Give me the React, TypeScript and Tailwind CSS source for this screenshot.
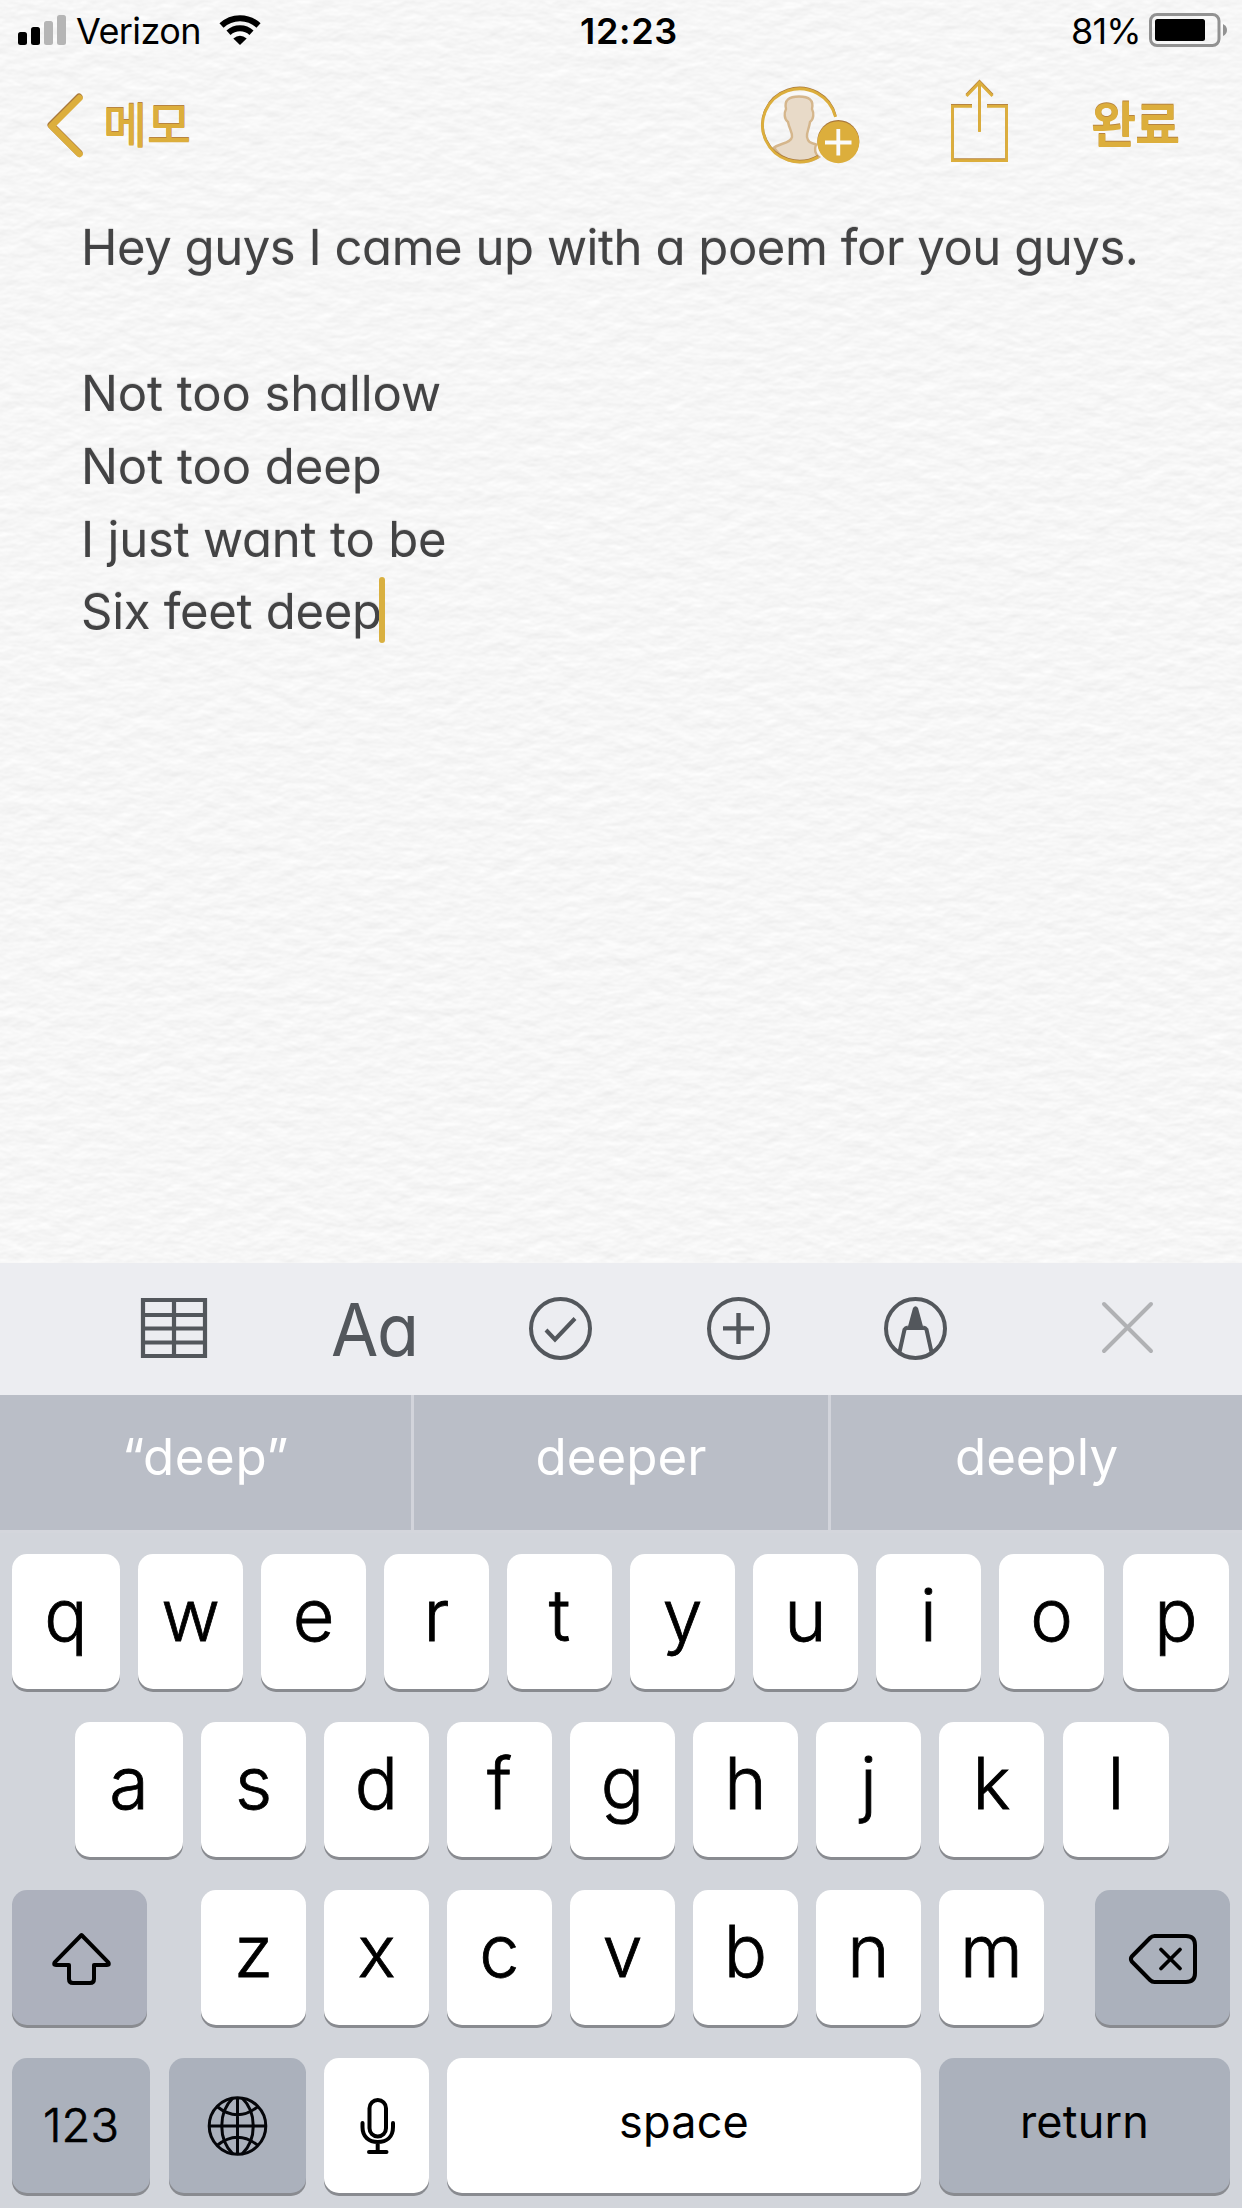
import type { ReactNode } from "react";

const GOLD = "#dcae3c";
const INK = "#53575c";

function Icon({ box, className = "", children }: { box: [number, number, number, number]; className?: string; children: ReactNode }) {
  return (
    <svg
      viewBox={box.join(" ")}
      width={box[2]}
      height={box[3]}
      fill="none"
      className={`block shrink-0 overflow-visible ${className}`}
    >
      {children}
    </svg>
  );
}

function PaperTexture() {
  return (
    <svg className="pointer-events-none absolute inset-0 h-full w-full" aria-hidden="true">
      <filter id="paper" x="0" y="0" width="100%" height="100%" colorInterpolationFilters="sRGB">
        <feTurbulence type="fractalNoise" baseFrequency="0.045 0.08" numOctaves="3" seed="8" result="n" />
        <feDiffuseLighting in="n" surfaceScale="0.26" diffuseConstant="1.12" lightingColor="#f9f9f9">
          <feDistantLight azimuth="264" elevation="62" />
        </feDiffuseLighting>
      </filter>
      <rect width="100%" height="100%" filter="url(#paper)" />
    </svg>
  );
}

function StatusBar() {
  return (
    <div className="flex h-[60px] items-start text-[36px] leading-[62px] text-black">
      <Icon box={[18, 15, 48, 30]} className="mt-[15px] ml-[18px]">
        <rect x="18" y="32" width="9" height="13" rx="2.5" fill="#000" />
        <rect x="31" y="27" width="9" height="18" rx="2.5" fill="#000" />
        <rect x="44" y="21" width="9" height="24" rx="2.5" fill="#b5b5b5" />
        <rect x="57" y="15" width="9" height="30" rx="2.5" fill="#b5b5b5" />
      </Icon>
      <span className="ml-[10px] w-[143px] tracking-[-0.6px]">Verizon</span>
      <Icon box={[219, 15, 42, 30]} className="mt-[15px]">
        <path d="M221.5 25.5A27 27 0 0 1 258.500 25.5" stroke="#000" strokeWidth="6" />
        <path d="M228.500 32.700A17 17 0 0 1 251.500 32.700" stroke="#000" strokeWidth="6" />
        <path d="M240 45L233.300 38.500Q240 33 246.700 38.500Z" fill="#000" />
      </Icon>
      <span className="ml-[319px] w-[119px] font-semibold tracking-[0.7px]">12:23</span>
      <span className="ml-[372px] w-[78px] tracking-[-0.8px]">81%</span>
      <Icon box={[1149, 13, 79, 34]} className="mt-[13px]">
        <rect x="1150.500" y="14.500" width="68.500" height="31" rx="6.500" stroke="#929292" strokeWidth="3" />
        <rect x="1155" y="19" width="50" height="22" rx="2.500" fill="#000" />
        <path d="M1223 24Q1227 26 1227 30Q1227 34 1223 36Z" fill="#929292" />
      </Icon>
    </div>
  );
}

function ShareGlyphs({ color }: { color: string }) {
  return (
    <g stroke={color} strokeWidth="2.800">
      <path d="M972 106.400H952.400V160.600H1006.600V106.400H987" />
      <path d="M979.500 132V83" />
      <path d="M966.500 96L979.500 82.500L992.500 96" />
    </g>
  );
}

function NavBar() {
  return (
    <div className="flex h-[151px] items-start font-['Inter','Noto_Sans_CJK_KR',sans-serif] text-[#dcae3c]">
      <Icon box={[47, 94, 36, 63]} className="mt-[34px] ml-[47px]">
        <path d="M79 97L51 125L79 153" stroke="#a9783c" strokeWidth="7" strokeLinecap="round" strokeLinejoin="round" />
        <path d="M79.500 98L51.500 126L79.500 154" stroke={GOLD} strokeWidth="6.500" strokeLinecap="round" strokeLinejoin="round" />
      </Icon>
      <span className="mt-[34px] ml-[20px] w-[100px] text-[48px] leading-[64px] font-medium tracking-[-0.2px] [text-shadow:0_-1px_0_#b88440]">메모</span>
      <Icon box={[762, 86, 98, 77]} className="mt-[27px] ml-[559px]">
        <path
          d="M774 146.500C781 142 791 142 792 136C792.500 131 789.500 129 788 121C784 118 784 112 786 108C784 99 789 95.500 799 95.500C809 95.500 814 99 812 108C814 112 814 118 810 121C809 128 806.500 131 807 136C808 141 810 142 816 143.500C814 149 815 153 819 156C814 159.500 807 161 799.500 161C789 161 780 156 774 146.500Z"
          fill="#e8dac8"
          stroke="#d5b68c"
          strokeWidth="2.400"
        />
        <path d="M835.500 116A37 36.500 0 1 0 818 156" stroke="#a9783c" strokeWidth="2.500" transform="translate(0 -1)" />
        <path d="M835.500 116A37 36.500 0 1 0 818 156" stroke={GOLD} strokeWidth="2.800" />
        <circle cx="838.300" cy="140" r="21" fill="#a9783c" />
        <circle cx="838.300" cy="141.200" r="21" fill={GOLD} />
        <path d="M825 141.500H851.500M838.300 128V154.500" stroke="#fafafa" strokeWidth="3.800" />
      </Icon>
      <Icon box={[950, 80, 59, 83]} className="mt-[20px] ml-[90px]">
        <g transform="translate(0 -1)"><ShareGlyphs color="#b88440" /></g>
        <ShareGlyphs color={GOLD} />
      </Icon>
      <span className="mt-[34px] ml-[82px] text-[49px] leading-[64px] font-bold tracking-[-1px] [text-shadow:0_-1px_0_#b88440]">완료</span>
    </div>
  );
}

function Note() {
  return (
    <div className="px-[81px] text-[49px] leading-[73px] whitespace-pre text-[#434344] [font-feature-settings:'cv11'] [text-shadow:0_-1px_1px_rgba(0,0,0,0.15)]">
      <p className="tracking-[-0.45px]">Hey guys I came up with a poem for you guys.</p>
      <p className="h-[73px]" />
      <p className="tracking-[-0.1px]">Not too shallow</p>
      <p className="tracking-[-0.05px]">Not too deep</p>
      <p className="tracking-[-0.2px]">I just want to be</p>
      <p className="-mt-px flex items-center tracking-[-0.3px]">
        Six feet deep
        <span className="-mt-[3px] -ml-[3px] h-[66px] w-[6px] rounded-full bg-[#d9b040]" />
      </p>
    </div>
  );
}

function Toolbar() {
  return (
    <div className="relative flex h-[132px] items-start bg-[#ecedf1]">
      <Icon box={[141, 1298, 66, 60]} className="mt-[35px] ml-[141px]">
        <path d="M143 1300H205V1356H143ZM174 1300V1356M143 1315H205M143 1328.500H205M143 1342.500H205" stroke={INK} strokeWidth="4.200" />
      </Icon>
      <span className="mt-[27px] ml-[124px] w-[198px] origin-left scale-x-[0.94] text-[73px] leading-[80px] tracking-[-1.5px] text-[#53575c] [font-feature-settings:'cv11']">Aa</span>
      <Icon box={[529, 1297, 63, 63]} className="mt-[34px]">
        <circle cx="560.500" cy="1328.400" r="29.500" stroke={INK} strokeWidth="4" />
        <path d="M546 1330L555 1339.500L575 1318.500" stroke={INK} strokeWidth="4" />
      </Icon>
      <Icon box={[707, 1297, 63, 63]} className="mt-[34px] ml-[115px]">
        <circle cx="738.500" cy="1328.400" r="29.500" stroke={INK} strokeWidth="4" />
        <path d="M723 1328.400H754M738.500 1313V1344" stroke={INK} strokeWidth="4.400" />
      </Icon>
      <Icon box={[884, 1297, 63, 63]} className="mt-[34px] ml-[114px]">
        <circle cx="915.500" cy="1328.400" r="29.500" stroke={INK} strokeWidth="4" />
        <path d="M899.500 1352L904.500 1329.500Q905.500 1328 908 1327.500M931.500 1352L926.500 1329.500Q925.500 1328 923 1327.500" stroke={INK} strokeWidth="4" />
        <path d="M907 1330L913 1308Q915.500 1304.500 918 1308L924 1330Z" fill={INK} />
      </Icon>
      <Icon box={[1102, 1302, 51, 51]} className="mt-[39px] ml-[155px]">
        <path d="M1104 1304L1151 1351M1151 1304L1104 1351" stroke="#b0b1b4" strokeWidth="4" strokeLinecap="round" />
      </Icon>
    </div>
  );
}

function Suggestions() {
  return (
    <div className="flex h-[135px] bg-[#babec7] text-center text-[51px] leading-[124px] text-white">
      <div className="w-[411px] tracking-[0.6px]">“deep”</div>
      <div className="w-[3px] bg-[#d2d4db]" />
      <div className="w-[414px]">deeper</div>
      <div className="w-[3px] bg-[#d2d4db]" />
      <div className="w-[411px]">deeply</div>
    </div>
  );
}

function Key({ children, width = "w-[105px]", tone = "bg-white", text = "pb-[13px] text-[72px] font-light [-webkit-text-stroke:0.8px_#000]" }: {
  children: ReactNode;
  width?: string;
  tone?: string;
  text?: string;
}) {
  return (
    <div className={`flex h-[135px] shrink-0 items-center justify-center rounded-[15px] leading-none text-black shadow-[0_3px_0_#898b90] ${width} ${tone} ${text}`}>
      {children}
    </div>
  );
}

const DARK = "bg-[#abb1bc]";
const LABEL = "pb-[9px] text-[45px] tracking-[0.2px]";

function keyWidth(c: string) {
  if (c === "q" || c === "a") return "w-[108px]";
  if (c === "p" || c === "l") return "ml-px w-[106px]";
  return "w-[105px]";
}

function Keyboard() {
  return (
    <div className="flex h-[678px] flex-col gap-[33px] border-t-[3px] border-[#d4d6dc] bg-[#d2d5db] px-[12px] pt-[21px]">
      <div className="flex gap-[18px]">
        {"qwertyuiop".split("").map((c) => (
          <Key key={c} width={keyWidth(c)}>{c}</Key>
        ))}
      </div>
      <div className="flex gap-[18px] pl-[63px]">
        {"asdfghjkl".split("").map((c) => (
          <Key key={c} width={keyWidth(c)}>{c}</Key>
        ))}
      </div>
      <div className="flex">
        <Key width="w-[135px]" tone="bg-[#adb1bd]" text="pl-[3px]">
          <Icon box={[52, 1931, 59, 54]}>
            <path
              d="M81.500 1935L54.700 1962.300Q53 1965 56 1965H69V1979Q69 1983 73 1983H90Q94 1983 94 1979V1965H107Q110 1965 108.300 1962.300Z"
              stroke="#000"
              strokeWidth="4"
              strokeLinejoin="round"
            />
          </Icon>
        </Key>
        <div className="mr-[51px] ml-[54px] flex gap-[18px]">
          {"zxcvbnm".split("").map((c) => (
            <Key key={c}>{c}</Key>
          ))}
        </div>
        <Key width="w-[135px]" tone={DARK} text="">
          <Icon box={[1129, 1932, 68, 52]}>
            <path
              d="M1154.500 1936H1186Q1195 1936 1195 1945V1973Q1195 1982 1186 1982H1154.500Q1152 1982 1150 1980L1131.800 1961.500Q1130 1959 1131.800 1956.500L1150 1938Q1152 1936 1154.500 1936Z"
              stroke="#000"
              strokeWidth="4"
              strokeLinejoin="round"
            />
            <path d="M1161 1949.500L1180 1968.500M1180 1949.500L1161 1968.500" stroke="#000" strokeWidth="3.800" strokeLinecap="round" />
          </Icon>
        </Key>
      </div>
      <div className="flex gap-[18px]">
        <Key width="w-[138px]" tone={DARK} text="pb-[2px] text-[47px] font-light [-webkit-text-stroke:0.7px_#000]">123</Key>
        <Key width="w-[137px] ml-px" tone={DARK} text="">
          <Icon box={[208, 2096, 59, 60]}>
            <g stroke="#05060a" strokeWidth="3">
              <circle cx="237.500" cy="2126" r="28.300" />
              <path d="M237.500 2098V2154M209 2126H266M217 2106.500Q237.500 2123 258 2106.500M217 2145.500Q237.500 2129 258 2145.500" />
              <path d="M233 2098C218 2112 218 2140 233 2154M242 2098C257 2112 257 2140 242 2154" />
            </g>
          </Icon>
        </Key>
        <Key text="pl-[2px]">
          <Icon box={[360, 2098, 35, 57]}>
            <g stroke="#000" strokeWidth="4" strokeLinecap="round">
              <rect x="369.500" y="2101" width="16.500" height="36.500" rx="8.250" />
              <path d="M362.500 2124V2128C362.500 2138 369 2143 377.700 2143C386.500 2143 393 2138 393 2128V2124M377.700 2144V2152M369 2153H386.500" />
            </g>
          </Icon>
        </Key>
        <Key width="w-[474px]" text={LABEL}>space</Key>
        <Key width="w-[291px]" tone={DARK} text={LABEL}>return</Key>
      </div>
    </div>
  );
}

export default function App() {
  return (
    <div className="flex h-[2208px] w-[1242px] flex-col overflow-hidden bg-[#f6f6f6] font-['Inter',sans-serif]">
      <div className="relative h-[1263px]">
        <PaperTexture />
        <div className="relative">
          <StatusBar />
          <NavBar />
          <Note />
        </div>
      </div>
      <Toolbar />
      <Suggestions />
      <Keyboard />
    </div>
  );
}
